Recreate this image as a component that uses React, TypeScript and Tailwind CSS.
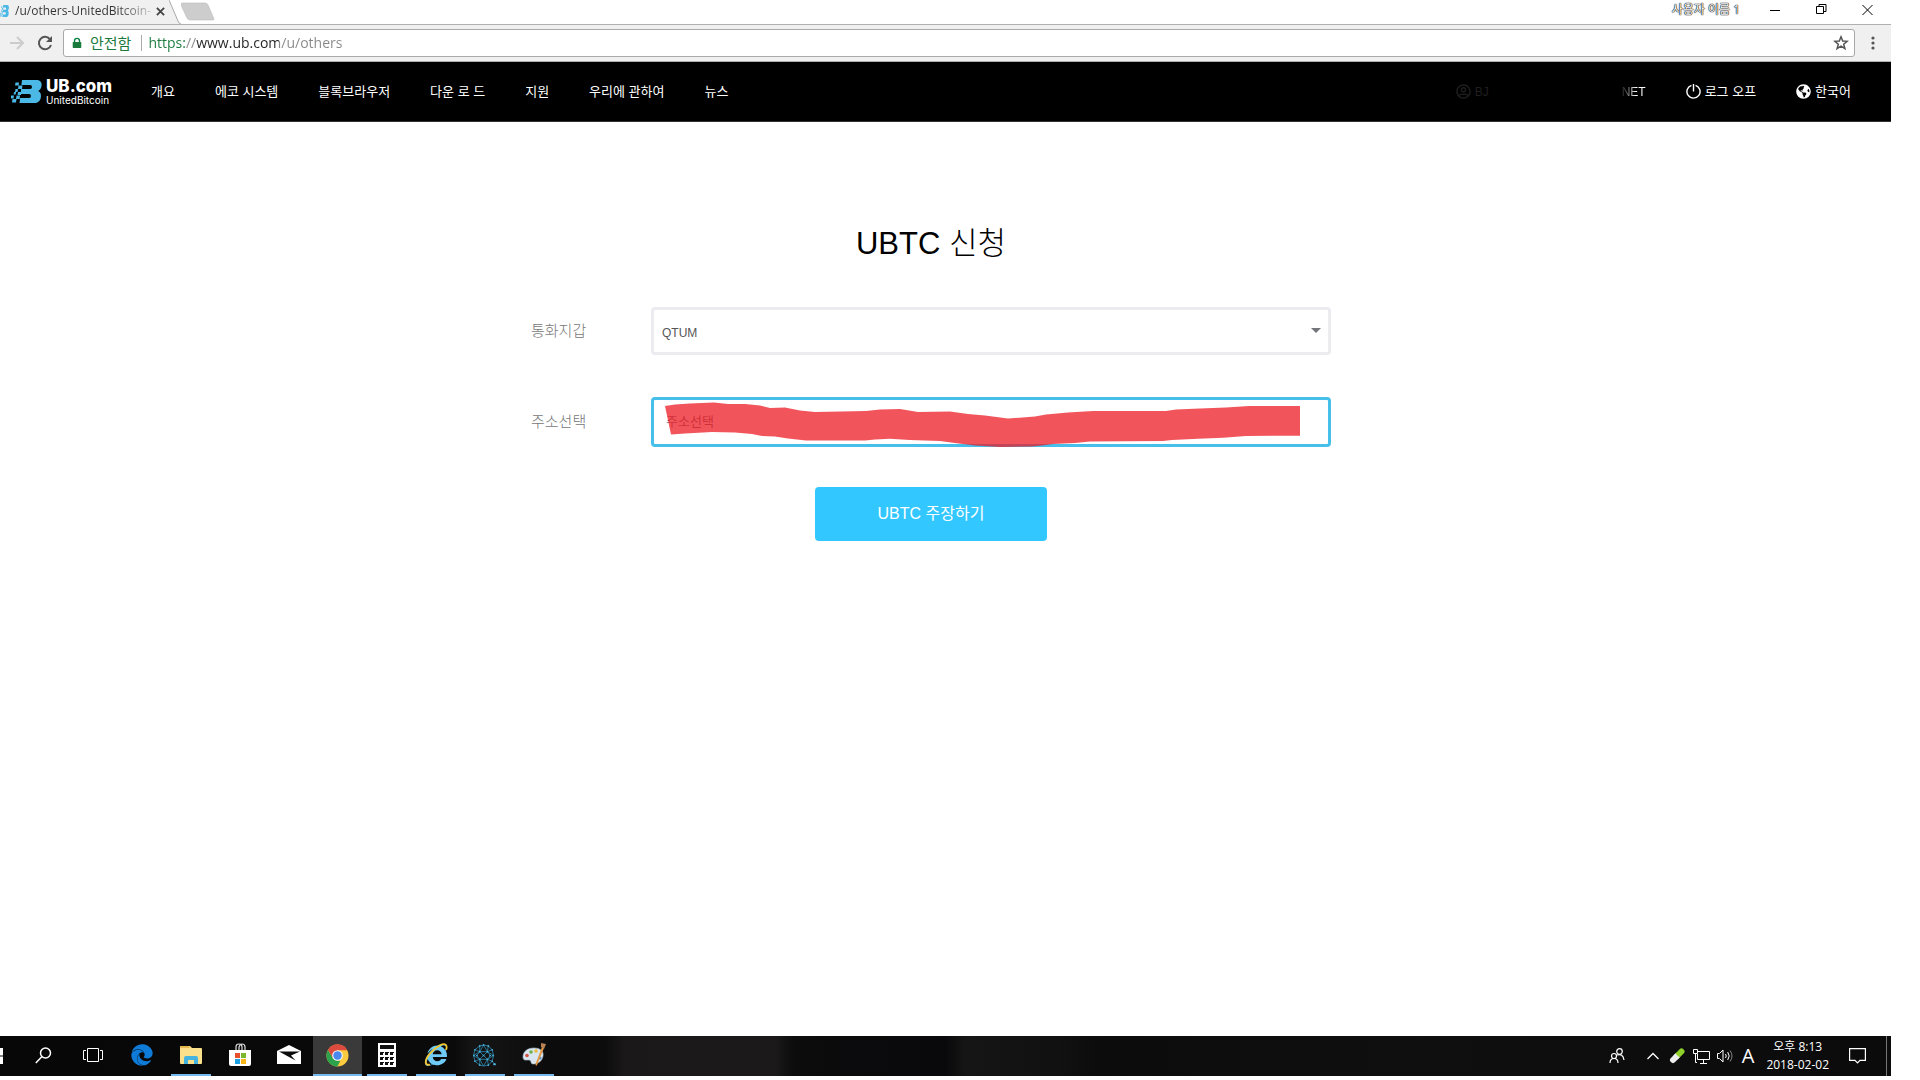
import { useState } from "react";
import type { ReactNode } from "react";
import { FaEdge, FaGlobeAmericas, FaInternetExplorer, FaRegUserCircle } from "react-icons/fa";

const navItems = ["개요", "에코 시스템", "블록브라우저", "다운 로 드", "지원", "우리에 관하여", "뉴스"];

function LogoMark({ className }: { className: string }) {
  return (
    <svg viewBox="0 0 31 23" preserveAspectRatio="none" className={className} fill="#4cb8e6" aria-hidden="true">
      <path d="M11 0h14c4 0 6 2 5.600 5.500-.3 2.700-1.500 4.500-3.400 5.500 2.200 1 3.100 3 2.700 6-.6 4-2.900 6-6.900 6H8.500l.6-5H18q2 0 2-2T18 14H9.500l.7-5H19q2 0 2-2T19 5h-8.600z" />
      <path d="M4.500 2.500h3.500l-.4 3H4zM7.500 5.500h4l-.5 3.500H7zM4.500 9H7l-.4 3H4zM7 12h3.500L10 15H6.600zM3 12h2l-.3 2.500H2.600zM0 15.500h3l-.5 3H0zM5.500 15.500H9l-.4 3.500H5zM1.500 19h4L5 22.500H1z" />
    </svg>
  );
}

function BrowserChrome() {
  const [url, setUrl] = useState("https://www.ub.com/u/others");

  return (
    <header className="font-['Open_Sans','Noto_Sans_CJK_KR',sans-serif]">
      {/* Tab strip */}
      <div className="flex h-6 items-stretch justify-between">
        <div className="flex">
          <div className="flex items-center bg-[#f0f0f0] pb-[2px]">
            <LogoMark className="h-3 w-[9px]" />
            <span className="ml-[6px] whitespace-nowrap bg-linear-to-r from-[#333] from-75% to-[#ccc] bg-clip-text text-xs text-transparent">
              /u/others-UnitedBitcoin-
            </span>
            <button type="button" aria-label="탭 닫기" className="flex w-[18px] justify-center">
              <svg viewBox="0 0 10 10" className="size-[9px]" stroke="#444" strokeWidth="2">
                <path d="M1 1l8 8M9 1l-8 8" />
              </svg>
            </button>
          </div>
          <svg viewBox="0 0 12 24" className="h-6 w-3" aria-hidden="true">
            <path d="M0 0l9 21q1 3 3 3H0z" fill="#f0f0f0" />
            <path d="M0 0l9 21q1 3 3 3" fill="none" stroke="#a8a8a8" />
          </svg>
          <button type="button" aria-label="새 탭">
            <svg viewBox="0 0 36 24" className="h-6 w-9">
              <path d="M1 3h23q2 0 3 2l6 14q0 1-1 1H9q-2 0-3-2L0 5q0-2 1-2z" fill="#cdcdcd" stroke="#bbb" strokeWidth=".6" />
            </svg>
          </button>
        </div>
        <div className="flex items-center pr-px pb-1">
          <span className="mr-3 text-xs text-white [text-shadow:0_0_1px_#000,0_0_1px_#000,0_0_1px_#000]">사용자 이름 1</span>
          <button type="button" aria-label="최소화" className="flex w-[46px] justify-center">
            <svg viewBox="0 0 11 18" className="h-[18px] w-[11px]" stroke="#000">
              <path d="M0 9.500h10" />
            </svg>
          </button>
          <button type="button" aria-label="이전 크기로" className="flex w-[46px] justify-center">
            <svg viewBox="0 0 11 18" className="h-[18px] w-[11px]" fill="none" stroke="#000">
              <path d="M.5 5.500h7v7h-7zM3 5V3.500h7v7H8" />
            </svg>
          </button>
          <button type="button" aria-label="닫기" className="flex w-[46px] justify-center">
            <svg viewBox="0 0 11 18" className="h-[18px] w-[11px]" stroke="#000">
              <path d="M.5 4l10 10M10.500 4l-10 10" />
            </svg>
          </button>
        </div>
      </div>

      {/* Toolbar */}
      <div className="flex h-[38px] items-center border-y border-[#b0b0b0] bg-[#f0f0f0] pl-[9px]">
        <button type="button" aria-label="앞으로">
          <svg viewBox="0 0 16 16" className="size-4" fill="none" stroke="#ccc" strokeWidth="2">
            <path d="M1 8h13M8 2l6 6-6 6" />
          </svg>
        </button>
        <button type="button" aria-label="새로고침" className="ml-3">
          <svg viewBox="0 0 16 16" className="size-4" fill="none" stroke="#555" strokeWidth="2">
            <path d="M13.200 4.500A6.200 6.200 0 1 0 14 10" />
            <path d="M15 1v6H9z" fill="#555" stroke="none" />
          </svg>
        </button>
        <div className="ml-[10px] flex h-7 flex-1 items-center rounded-[3px] border border-[#a9a9a9] bg-white pr-[5px] pl-[6px]">
          <svg viewBox="0 0 14 16" className="ml-[2px] h-3 w-[10px]" aria-hidden="true">
            <path d="M3.500 8V5a3.500 3.500 0 0 1 7 0v3" fill="none" stroke="#0b8043" strokeWidth="2" />
            <rect x="1" y="6.500" width="12" height="8.500" rx="1" fill="#1a7a3c" />
          </svg>
          <span className="ml-2 text-[15px] text-[#1a7a3c]">안전함</span>
          <span className="ml-[10px] h-4 w-px bg-[#aaa]" />
          <input
            type="text"
            aria-label="주소창"
            value={url}
            onChange={(e) => setUrl(e.target.value)}
            className="ml-[6px] min-w-0 flex-1 bg-[linear-gradient(90deg,#1a7a3c_37px,#888_37px,#888_48px,#222_48px,#222_131px,#888_131px)] bg-clip-text text-sm text-transparent outline-none"
          />
          <button type="button" aria-label="북마크">
            <svg viewBox="0 0 16 16" className="size-4" fill="none" stroke="#555" strokeWidth="1.500">
              <path d="M8 1.800l1.700 4.200 4.500.3-3.500 2.900 1.200 4.500L8 11.200l-3.900 2.500 1.200-4.500L1.800 6.300l4.500-.3z" />
            </svg>
          </button>
        </div>
        <button type="button" aria-label="메뉴" className="flex w-9 justify-center">
          <svg viewBox="0 0 4 14" className="h-[14px] w-1" fill="#555">
            <circle cx="2" cy="2" r="1.600" />
            <circle cx="2" cy="7" r="1.600" />
            <circle cx="2" cy="12" r="1.600" />
          </svg>
        </button>
      </div>
    </header>
  );
}

function SiteNav() {
  return (
    <nav className="flex h-[60px] items-center border-b border-[#333] bg-black pr-10 pl-[11px] text-[13px] text-white">
      <a href="#home" className="flex w-[100px] items-center">
        <LogoMark className="h-[23px] w-[31px] shrink-0" />
        <span className="ml-1 flex flex-col font-['Inter',sans-serif]">
          <span className="text-[17px] leading-[17px] font-extrabold">UB.com</span>
          <span className="text-[10px] leading-[10px]">UnitedBitcoin</span>
        </span>
      </a>
      <ul className="ml-10 flex gap-10">
        {navItems.map((item) => (
          <li key={item}>
            <a href="#menu">{item}</a>
          </li>
        ))}
      </ul>
      <div className="ml-auto flex items-center gap-10">
        <a href="#account" className="flex w-[190px] items-center text-xs text-[#1f1f1f]">
          <FaRegUserCircle className="mr-1 size-[15px]" />
          BJ
          <span className="ml-auto bg-linear-to-r from-[#222] to-white to-60% bg-clip-text text-transparent">NET</span>
        </a>
        <a href="#logout" className="flex items-center gap-1">
          <svg viewBox="0 0 16 16" className="size-[15px]" fill="none" stroke="#fff" strokeWidth="1.500" aria-hidden="true">
            <path d="M5.800 1.400a7 7 0 1 0 4.400 0M8 0v8" />
          </svg>
          로그 오프
        </a>
        <a href="#lang" className="flex items-center gap-1">
          <FaGlobeAmericas className="size-[15px]" />
          한국어
        </a>
      </div>
    </nav>
  );
}

function ClaimForm() {
  return (
    <main className="flex-1 bg-white pt-[104px] pr-[29px]">
      <form className="mx-auto flex max-w-[800px] flex-col" onSubmit={(e) => e.preventDefault()}>
        <h1 className="mb-[45px] text-center text-[31px] leading-9 font-light text-black">UBTC 신청</h1>

        <div className="mb-[42px] flex items-center">
          <label htmlFor="wallet" className="w-[120px] text-[15px] font-light text-[#777]">
            통화지갑
          </label>
          <div className="relative flex-1">
            <select
              id="wallet"
              className="block h-12 w-full appearance-none rounded-[4px] border-3 border-[#ebebf0] bg-white px-2 pt-[3px] text-xs text-[#555] outline-none"
            >
              <option>QTUM</option>
            </select>
            <svg viewBox="0 0 10 5" className="pointer-events-none absolute top-[21px] right-[10px] h-[5px] w-[10px]" fill="#73757b">
              <path d="M0 0h10L5 5z" />
            </svg>
          </div>
        </div>

        <div className="mb-10 flex items-center">
          <label htmlFor="address" className="w-[120px] text-[15px] font-light text-[#777]">
            주소선택
          </label>
          <div className="relative flex-1">
            <select
              id="address"
              className="block h-[50px] w-full appearance-none rounded-[4px] border-3 border-[#46c0ea] bg-white px-3 text-[13px] text-[#757575] outline-none"
            >
              <option>주소선택</option>
            </select>
            {/* Marker stroke over the address */}
            <svg viewBox="0 0 680 50" preserveAspectRatio="none" className="pointer-events-none absolute inset-0 size-full" aria-hidden="true">
              <path
                d="M14 9L24 7.500 39 6.500 63 5.500 77 7 94 7 109 8.500 119 11 134 10.500 149 13.500 164 15 215 14 229 12.500 249 12 267 15 299 14.500 317 17 334 18.500 357 21.500 384 19.500 395 17.500 417 15.500 442 14 515 14 525 12.500 549 11.500 575 10.500 598 9H649V38.700L595 39 572 40.700 547 41.700 521 43 512 44 439 44.500 424 46 402 47 391 48.500 381 49.500 349 50 324 48.500 304 46 289 44 259 43 239 41.800 224 42.500 214 43.500H155L137 41.500 124 39.500 111 39 101 37 84 35.500 61 35 34 36.500 20 37.500z"
                fill="#ee1b26"
                fillOpacity=".75"
              />
            </svg>
          </div>
        </div>

        <button type="submit" className="h-[54px] w-[232px] self-center rounded-[4px] bg-[#33c7ff] text-base text-white">
          UBTC 주장하기
        </button>
      </form>
    </main>
  );
}

function ChromeIcon() {
  return (
    <svg viewBox="0 0 24 24" className="size-[23px]">
      <circle cx="12" cy="12" r="11.500" fill="#fbcb3f" />
      <path d="M2 6.200A11.500 11.500 0 0 1 22.200 6.500H12L7 14.800z" fill="#dd4b3e" />
      <path d="M2 6.200L7.300 15l4.700 2.500h3L11.800 23.500A11.500 11.500 0 0 1 2 6.200z" fill="#2ba24c" />
      <circle cx="12" cy="12" r="5.600" fill="#f4f4f4" />
      <circle cx="12" cy="12" r="4.400" fill="#4a88ee" />
    </svg>
  );
}

function CalcIcon() {
  return (
    <svg viewBox="0 0 18 24" className="h-6 w-[18px]">
      <path d="M0 0h18v24H0z" fill="#fff" />
      <path d="M2 2h14v4H2z" fill="#111" />
      <g fill="#111">
        {[9, 14, 19].map((y) =>
          [2, 7, 12].map((x) => <path key={`${x}-${y}`} d={`M${x} ${y}h4v1h-1v2h-3z`} />)
        )}
      </g>
    </svg>
  );
}

function FolderIcon() {
  return (
    <svg viewBox="0 0 22 18" className="h-[18px] w-[22px]">
      <path d="M0 1q0-1 1-1h9l2 2h9q1 0 1 1v14q0 1-1 1H1q-1 0-1-1z" fill="#fbe08c" />
      <path d="M1 0h8l1 2H0V1z" fill="#e5b94e" />
      <path d="M4 18v-6q0-2 2-2h10q2 0 2 2v6h-4v-4H8v4z" fill="#45b3e0" />
    </svg>
  );
}

function StoreIcon() {
  return (
    <svg viewBox="0 0 24 24" className="size-6">
      <path d="M8 7V4q0-3 3-3t3 3v3M11 7V4q1-3 3-3 3 0 3 3v3" fill="none" stroke="#ddd" strokeWidth="1.200" />
      <path d="M1 7h22v14q0 2-2 2H3q-2 0-2-2z" fill="#fff" />
      <path d="M7 10h5v5H7z" fill="#e8502d" />
      <path d="M13 10h5v5h-5z" fill="#7cb82f" />
      <path d="M7 16h5v5H7z" fill="#1b9fe0" />
      <path d="M13 16h5v5h-5z" fill="#f8b617" />
    </svg>
  );
}

function MailIcon() {
  return (
    <svg viewBox="0 0 24 20" className="h-5 w-6">
      <path d="M0 6L12 0l12 6v13H0z" fill="#fff" />
      <path d="M2 6.500h21L14 10.500l4.500 5z" fill="#0b0b0b" />
    </svg>
  );
}

function ExplorerIcon() {
  return (
    <span className="relative">
      <FaInternetExplorer className="size-[22px] text-[#6fcbf5]" />
      <svg viewBox="0 0 24 24" className="absolute -top-px -left-px size-6" fill="none" stroke="#f3c62e" strokeWidth="1.800">
        <path d="M6 21.500C1 23-.5 18 6 10.500S21-1.500 22.500 3q.5 1.500-.5 4" />
      </svg>
    </span>
  );
}

function NetworkIcon() {
  return (
    <svg viewBox="0 0 24 24" className="size-[23px]" fill="none" stroke="#2f8fb8" strokeWidth=".8">
      <path d="M7 2l4-1 5 1 4 4 1.500 6-1.500 6-4 4-5 1-4-1-5-4-1.500-6L2 6zM2 6l5 2 4-7 4 7 5-2M7 2v6M16 2l-1 6M.5 12L7 8h8l6.500 4M.5 12L7 16h8l6.500-4M2 18l5-2 4 7 4-7 5 2M7 22v-6M16 22l-1-6M7 8l-3 4 3 4 4-4zM15 8l3 4-3 4-4-4zM20 18l2.500 3" />
      <g fill="#4bb4dd" stroke="none">
        {["7 8", "15 8", "11 12", "7 16", "15 16", "7 2", "16 2", "11 1", "2 6", "20 6", "1 12", "21 12", "2 18", "20 18", "7 22", "16 22", "4 12", "18 12"].map((p) => (
          <circle key={p} cx={p.split(" ")[0]} cy={p.split(" ")[1]} r=".9" />
        ))}
        <circle cx="22.500" cy="21" r="1.300" />
      </g>
    </svg>
  );
}

function PaintIcon() {
  return (
    <svg viewBox="0 0 24 24" className="size-6">
      <path d="M1 14C1 8 6 5 12 5s10 3 9 8c-1 6-6 8-10 8-3 0-1-4-4-4s-6 1-6-3z" fill="#d9e6f0" stroke="#a7bccb" strokeWidth=".6" />
      <circle cx="5" cy="12.500" r="1.800" fill="#d2553f" />
      <circle cx="9" cy="9" r="1.800" fill="#72b04a" />
      <circle cx="14" cy="8" r="1.800" fill="#e9bb3b" />
      <circle cx="18" cy="15" r="1.600" fill="#4f8fd0" />
      <path d="M20 4l2 1-7 17-1 1-.500-2z" fill="#e39a43" />
      <path d="M19 0l5 1-2 5-3-2z" fill="#b98255" />
    </svg>
  );
}

type TaskProps = { label: string; open?: boolean; active?: boolean; children: ReactNode };

function Task({ label, open, active, children }: TaskProps) {
  return (
    <button type="button" aria-label={label} className={`flex w-[49px] flex-col items-center ${active ? "bg-[#3a3a3a]" : ""}`}>
      <span className="flex flex-1 items-center">{children}</span>
      <span className={`h-[2px] ${active ? "w-full" : "w-10"} ${open ? "bg-[#76b9ed]" : ""}`} />
    </button>
  );
}

function Taskbar() {
  return (
    <footer className="flex h-10 items-stretch bg-[linear-gradient(90deg,#070707_0%,#0a0a0a_24%,#151515_25%,#0c0c0c_29%,#0c0c0c_32%,#1a1819_33%,#1b191a_41%,#0c0c0d_42%,#09090b_50%,#151515_51%,#111_56%,#0c0c0d_58%,#0f0f0f_75%,#0b0b0c_100%)] font-['Open_Sans','Noto_Sans_CJK_KR',sans-serif] text-white">
      <button type="button" aria-label="시작" className="flex w-[19px] items-center">
        <svg viewBox="0 0 3 16" className="h-4 w-[3px]" fill="#fff">
          <path d="M0 0h3v7.500H0zM0 8.500h3V16H0z" />
        </svg>
      </button>
      <Task label="검색">
        <svg viewBox="0 0 17 17" className="size-[17px]" fill="none" stroke="#fff" strokeWidth="1.500">
          <circle cx="10.500" cy="6" r="5" />
          <path d="M7 9.500L.8 16" />
        </svg>
      </Task>
      <Task label="작업 보기">
        <svg viewBox="0 0 20 16" className="h-4 w-5" fill="none" stroke="#fff">
          <path d="M4.500 1.500h11v13h-11zM3 3.500H.5v9H3M17 3.500h2.500v9H17" />
        </svg>
      </Task>
      <Task label="Edge">
        <FaEdge className="size-[22px] text-[#0f7bd8]" />
      </Task>
      <Task label="파일 탐색기" open>
        <FolderIcon />
      </Task>
      <Task label="스토어">
        <StoreIcon />
      </Task>
      <Task label="메일">
        <MailIcon />
      </Task>
      <Task label="Chrome" open active>
        <ChromeIcon />
      </Task>
      <Task label="계산기" open>
        <CalcIcon />
      </Task>
      <Task label="Internet Explorer" open>
        <ExplorerIcon />
      </Task>
      <Task label="지갑" open>
        <NetworkIcon />
      </Task>
      <Task label="그림판" open>
        <PaintIcon />
      </Task>

      {/* Tray */}
      <div className="ml-auto flex items-center">
        <button type="button" aria-label="사람">
          <svg viewBox="0 0 16 16" className="size-4" fill="none" stroke="#fff" strokeWidth="1.200">
            <circle cx="10.500" cy="3.500" r="2.800" />
            <circle cx="5" cy="8" r="2.500" />
            <path d="M1 15q0-4.500 4-4.500T9 15M8 7q6-2 7 5" />
          </svg>
        </button>
        <button type="button" aria-label="숨겨진 아이콘 표시" className="ml-[22px]">
          <svg viewBox="0 0 12 8" className="h-2 w-3" fill="none" stroke="#fff" strokeWidth="1.300">
            <path d="M.5 7L6 1.500 11.500 7" />
          </svg>
        </button>
        <svg viewBox="0 0 16 16" className="ml-[10px] size-4" strokeLinecap="round" strokeWidth="6" aria-hidden="true">
          <path d="M4 12l4-4" stroke="#eee" />
          <path d="M9 7l3.500-3.500" stroke="#8fd02a" />
          <path d="M6.500 9.500L8.500 7.500" stroke="#eee" strokeLinecap="butt" />
        </svg>
        <svg viewBox="0 0 17 15" className="ml-2 h-[15px] w-[17px]" fill="none" stroke="#fff" aria-hidden="true">
          <path d="M5 2.500h11.500v8H4.500V5M.5.5h4v4h-4zM2.500 5v8.500H4M10.500 11v3M7 14.500h7" />
        </svg>
        <svg viewBox="0 0 17 14" className="ml-[7px] h-[14px] w-[17px]" fill="none" stroke="#fff" aria-hidden="true">
          <path d="M.5 4.500h2L6 1v12L2.500 9.500h-2zM8.500 5q1.500 2 0 4M10.700 3q3 4 0 8" />
          <path d="M13 1.500q4 5.500 0 11" stroke="#888" />
        </svg>
        <span className="ml-2 text-xl">A</span>
        <time className="ml-3 flex flex-col text-center text-xs leading-[18px]">
          <span>오후 8:13</span>
          <span>2018-02-02</span>
        </time>
        <button type="button" aria-label="알림" className="ml-5">
          <svg viewBox="0 0 17 16" className="h-4 w-[17px]" fill="none" stroke="#fff" strokeWidth="1.200">
            <path d="M.6.6h15.800v11.800H11L8.500 15 6 12.400H.6z" />
          </svg>
        </button>
        <span className="ml-5 h-10 w-[5px] border-l border-[#777]" />
      </div>
    </footer>
  );
}

export default function App() {
  return (
    <div className="flex min-h-screen flex-col bg-white pr-[29px] pb-1 font-['Liberation_Sans','Noto_Sans_CJK_KR',sans-serif]">
      <BrowserChrome />
      <SiteNav />
      <ClaimForm />
      <Taskbar />
    </div>
  );
}
